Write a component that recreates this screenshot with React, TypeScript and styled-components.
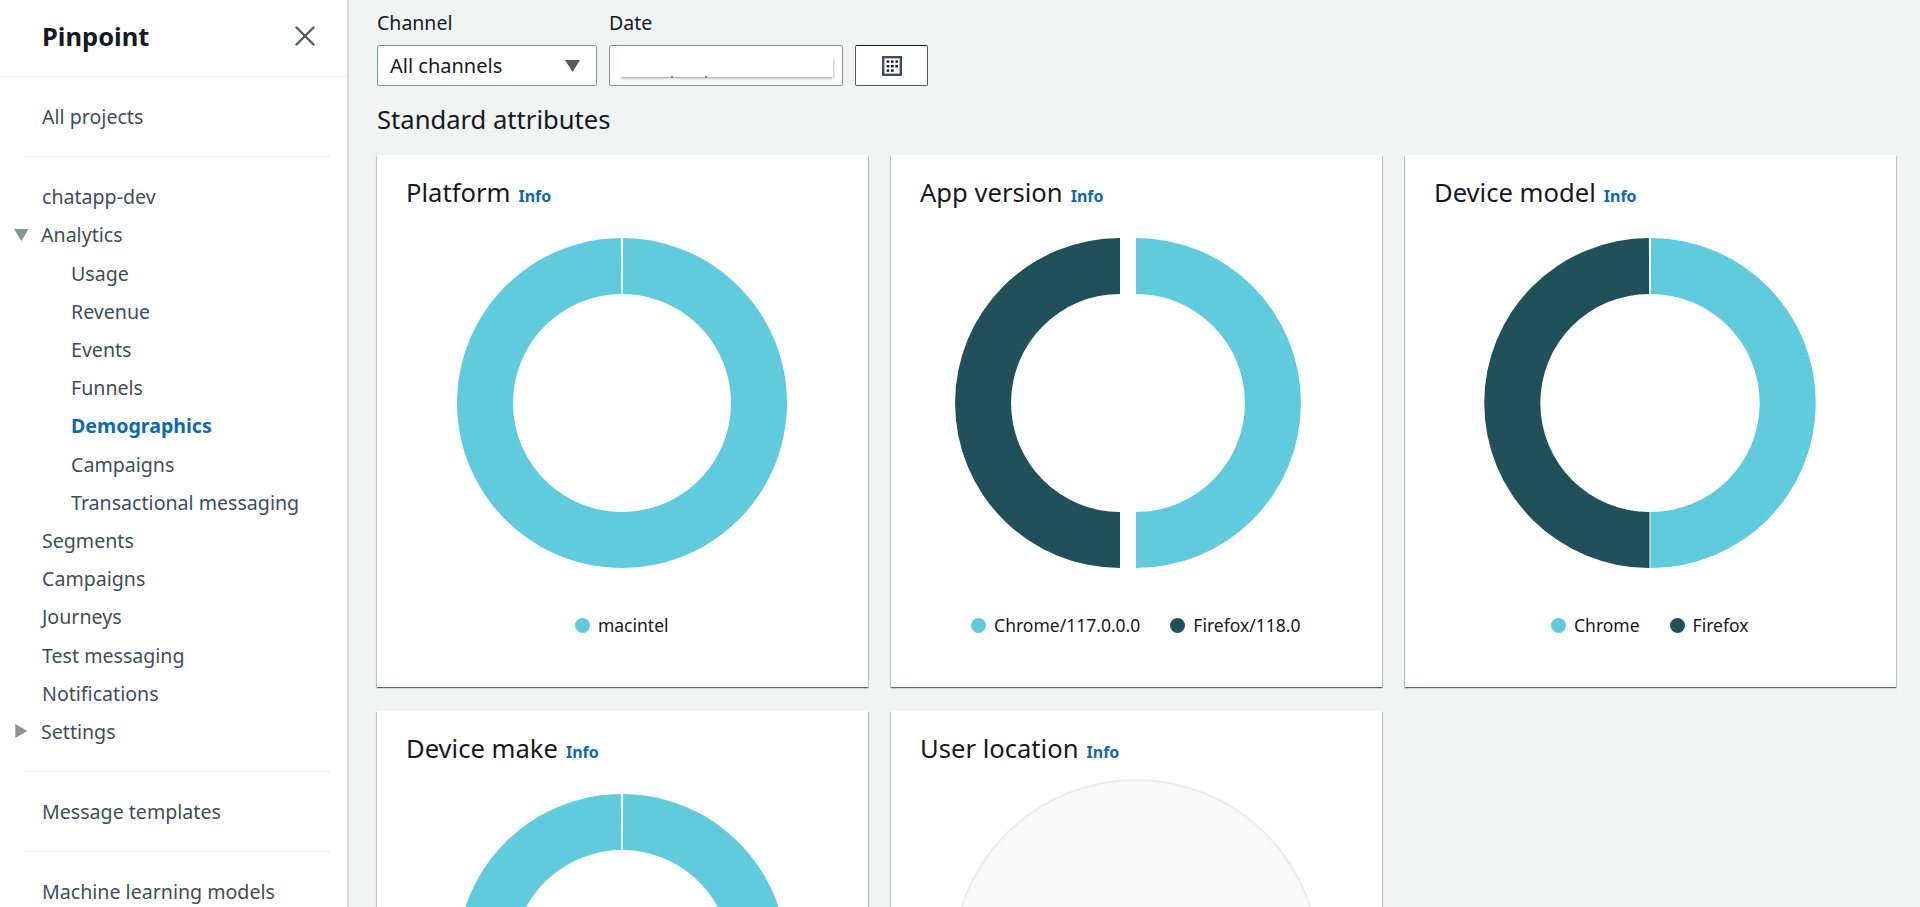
import { createGlobalStyle } from 'styled-components'
import styled from 'styled-components'
import { X } from 'lucide-react'

const CYAN = '#60cbdc'
const TEAL = '#20505a'

const GlobalStyle = createGlobalStyle`
  html,
  body {
    margin: 0;
    padding: 0;
    height: 907px;
    overflow: hidden;
    background: #f2f3f3;
    font-family: 'Noto Sans', 'Liberation Sans', sans-serif;
  }
`

const Page = styled.div`
  display: flex;
  height: 907px;
  overflow: hidden;
`

const Sidebar = styled.nav`
  flex: 0 0 349px;
  box-sizing: border-box;
  background: #fff;
  border-right: 2px solid #d5dbdb;
  overflow: hidden;
`

const SidebarHeader = styled.div`
  height: 77px;
  box-sizing: border-box;
  padding: 0 25px 5px 42px;
  display: flex;
  align-items: center;
  justify-content: space-between;
  border-bottom: 1px solid #e9ebed;
  font-size: 25.5px;
  font-weight: 700;
  color: #16191f;
`

const CloseButton = styled.span`
  display: flex;
  color: #545b64;
`

const NavSection = styled.div`
  padding: 20.5px 0;
  border-bottom: 1px solid #e9ebed;
  margin: 0 17px 0 24px;

  &:last-child {
    border-bottom: 0;
  }
`

const NavRow = styled.div<{ $sub?: boolean; $active?: boolean; $arrow?: boolean }>`
  height: 38.2px;
  display: flex;
  align-items: center;
  position: relative;
  padding-left: ${p => (p.$sub ? 47 : p.$arrow ? 17 : 18)}px;
  font-size: 19.6px;
  font-weight: ${p => (p.$active ? 700 : 400)};
  color: ${p => (p.$active ? '#0f68b5' : '#414d5c')};
  white-space: nowrap;
`

const NavArrow = styled.svg`
  position: absolute;
  left: -11px;
  top: 11px;
`

const Main = styled.main`
  flex: 1;
  min-width: 0;
  padding: 11px 25px 0 28px;
`

const Filters = styled.div`
  display: flex;
  align-items: flex-end;
  gap: 12px;
`

const Field = styled.div<{ $width: number }>`
  width: ${p => p.$width}px;
`

const FieldLabel = styled.div`
  height: 23px;
  line-height: 23px;
  margin-bottom: 11px;
  font-size: 19.5px;
  color: #16191f;
`

const SelectBox = styled.div`
  height: 41px;
  box-sizing: border-box;
  display: flex;
  align-items: center;
  justify-content: space-between;
  padding: 0 16px 0 12px;
  background: #fff;
  border: 1px solid #879596;
  border-radius: 2px;
  font-size: 20px;
  color: #16191f;
`

const DateBox = styled.div`
  height: 41px;
  box-sizing: border-box;
  padding: 10px 9px 8px;
  background: #fff;
  border: 1px solid #879596;
  border-radius: 2px;
`

const DateMask = styled.div`
  position: relative;
  height: 100%;
  box-shadow: 1px 2px 3px -1px rgba(60, 60, 60, 0.55);
`

const DateTick = styled.span<{ $left: number }>`
  position: absolute;
  left: ${p => p.$left}px;
  bottom: -1px;
  width: 2px;
  height: 2px;
  background: #8a8a8a;
`

const CalendarButton = styled.div`
  width: 73px;
  height: 41px;
  box-sizing: border-box;
  display: flex;
  align-items: center;
  justify-content: center;
  background: #fff;
  border: 1px solid #545b64;
  border-top-color: #16191f;
  border-radius: 2px;
`

const SectionTitle = styled.h2`
  margin: 18px 0 19px;
  height: 32px;
  line-height: 32px;
  font-size: 25.6px;
  font-weight: 400;
  color: #16191f;
`

const CardGrid = styled.div`
  display: grid;
  grid-template-columns: repeat(3, 490.5px);
  column-gap: 23.5px;
  row-gap: 24px;
`

const Card = styled.section`
  height: 531.5px;
  box-sizing: border-box;
  padding: 18px 24px 0 29px;
  background: #fff;
  box-shadow: 0 1px 1px 0 rgba(0, 28, 36, 0.5), 1px 1px 1px 0 rgba(0, 28, 36, 0.15), -1px 1px 1px 0 rgba(0, 28, 36, 0.15);
`

const CardTitle = styled.h3`
  margin: 0;
  height: 40px;
  line-height: 40px;
  font-size: 25.6px;
  font-weight: 400;
  color: #16191f;
  white-space: nowrap;
`

const InfoLink = styled.a`
  margin-left: 8px;
  font-size: 16px;
  font-weight: 700;
  color: #0f68b5;
`

const ChartArea = styled.div<{ $empty?: boolean }>`
  margin-top: ${p => (p.$empty ? 9 : 25)}px;
  height: 330px;
  display: flex;
  justify-content: center;
  transform: translateX(-3px);
`

const Legend = styled.div`
  margin-top: 45px;
  display: flex;
  justify-content: center;
  gap: 30px;
  transform: translateX(-3px);
`

const LegendItem = styled.div`
  display: flex;
  align-items: center;
  gap: 8px;
  font-size: 17.5px;
  color: #16191f;
`

const LegendDot = styled.span<{ $color: string }>`
  width: 15px;
  height: 15px;
  border-radius: 50%;
  background: ${p => p.$color};
`

const polar = (cx: number, cy: number, r: number, deg: number) => {
  const a = ((deg - 90) * Math.PI) / 180
  return `${(cx + r * Math.cos(a)).toFixed(2)} ${(cy + r * Math.sin(a)).toFixed(2)}`
}

// one ring segment, clockwise from start to end in degrees
const arcPath = (cx: number, cy: number, from: number, to: number) => {
  const R = 165
  const r = 109
  const large = to - from > 180 ? 1 : 0
  return [
    `M ${polar(cx, cy, R, from)}`,
    `A ${R} ${R} 0 ${large} 1 ${polar(cx, cy, R, to)}`,
    `L ${polar(cx, cy, r, to)}`,
    `A ${r} ${r} 0 ${large} 0 ${polar(cx, cy, r, from)}`,
    'Z',
  ].join(' ')
}

const FullRing = () => (
  <svg width="332" height="330" viewBox="0 0 332 330">
    <path d={arcPath(166, 165, 0.4, 359.6)} fill={CYAN} />
  </svg>
)

const SplitRing = () => (
  <svg width="332" height="330" viewBox="0 0 332 330">
    <path d={arcPath(166.5, 165, 0.2, 180)} fill={CYAN} />
    <path d={arcPath(165.5, 165, 180, 359.8)} fill={TEAL} />
  </svg>
)

// the wider box keeps the teal half off to the left of the card's centre
const ExplodedRing = () => (
  <svg width="362" height="330" viewBox="0 0 362 330">
    <path d={arcPath(181, 165, 0, 180)} fill={CYAN} />
    <path d={arcPath(165, 165, 180, 360)} fill={TEAL} />
  </svg>
)

const EmptyRing = () => (
  <svg width="370" height="370" viewBox="0 0 370 370">
    <circle cx="185" cy="185" r="183" fill="#f9f9f9" stroke="#eaeded" strokeWidth="2" />
  </svg>
)

const calendarDots = [
  [4.6, 4.4],
  [9, 4.4],
  [13.4, 4.4],
  [4.6, 9],
  [9, 9],
  [13.4, 9],
  [4.6, 13.4],
  [9, 13.4],
]

const CalendarIcon = () => (
  <svg width="20" height="20" viewBox="0 0 20 20">
    <rect x="1.2" y="1.2" width="17.6" height="17.6" fill="none" stroke="#414d5c" strokeWidth="2.4" />
    {calendarDots.map(([x, y]) => (
      <rect key={`${x}-${y}`} x={x} y={y} width="2.6" height="2.4" fill="#16191f" />
    ))}
  </svg>
)

const Caret = ({ right }: { right?: boolean }) => (
  <NavArrow width="16" height="16" viewBox="0 0 16 16">
    <path d={right ? 'M2.3 1 L14.3 8 L2.3 15 Z' : 'M1 2 L15.6 2 L8.3 14 Z'} fill="#879596" />
  </NavArrow>
)

const cards = [
  { title: 'Platform', chart: <FullRing />, legend: [{ label: 'macintel', color: CYAN }] },
  {
    title: 'App version',
    chart: <ExplodedRing />,
    legend: [
      { label: 'Chrome/117.0.0.0', color: CYAN },
      { label: 'Firefox/118.0', color: TEAL },
    ],
  },
  {
    title: 'Device model',
    chart: <SplitRing />,
    legend: [
      { label: 'Chrome', color: CYAN },
      { label: 'Firefox', color: TEAL },
    ],
  },
  { title: 'Device make', chart: <FullRing />, legend: [] },
  { title: 'User location', chart: <EmptyRing />, legend: [], empty: true },
]

const App = () => (
  <Page>
    <GlobalStyle />
    <Sidebar>
      <SidebarHeader>
        Pinpoint
        <CloseButton>
          <X size={34} strokeWidth={1.7} />
        </CloseButton>
      </SidebarHeader>
      <NavSection>
        <NavRow>All projects</NavRow>
      </NavSection>
      <NavSection>
        <NavRow>chatapp-dev</NavRow>
        <NavRow $arrow>
          <Caret />
          Analytics
        </NavRow>
        <NavRow $sub>Usage</NavRow>
        <NavRow $sub>Revenue</NavRow>
        <NavRow $sub>Events</NavRow>
        <NavRow $sub>Funnels</NavRow>
        <NavRow $sub $active>
          Demographics
        </NavRow>
        <NavRow $sub>Campaigns</NavRow>
        <NavRow $sub>Transactional messaging</NavRow>
        <NavRow>Segments</NavRow>
        <NavRow>Campaigns</NavRow>
        <NavRow>Journeys</NavRow>
        <NavRow>Test messaging</NavRow>
        <NavRow>Notifications</NavRow>
        <NavRow $arrow>
          <Caret right />
          Settings
        </NavRow>
      </NavSection>
      <NavSection>
        <NavRow>Message templates</NavRow>
      </NavSection>
      <NavSection>
        <NavRow>Machine learning models</NavRow>
      </NavSection>
    </Sidebar>
    <Main>
      <Filters>
        <Field $width={220}>
          <FieldLabel>Channel</FieldLabel>
          <SelectBox>
            All channels
            <svg width="15" height="12" viewBox="0 0 15 12">
              <path d="M0 0 L15 0 L7.5 12 Z" fill="#545b64" />
            </svg>
          </SelectBox>
        </Field>
        <Field $width={234}>
          <FieldLabel>Date</FieldLabel>
          <DateBox>
            <DateMask>
              <DateTick $left={52} />
              <DateTick $left={86} />
            </DateMask>
          </DateBox>
        </Field>
        <CalendarButton>
          <CalendarIcon />
        </CalendarButton>
      </Filters>
      <SectionTitle>Standard attributes</SectionTitle>
      <CardGrid>
        {cards.map(card => (
          <Card key={card.title}>
            <CardTitle>
              {card.title}
              <InfoLink>Info</InfoLink>
            </CardTitle>
            <ChartArea $empty={card.empty}>{card.chart}</ChartArea>
            {card.legend.length > 0 && (
              <Legend>
                {card.legend.map(item => (
                  <LegendItem key={item.label}>
                    <LegendDot $color={item.color} />
                    {item.label}
                  </LegendItem>
                ))}
              </Legend>
            )}
          </Card>
        ))}
      </CardGrid>
    </Main>
  </Page>
)

export default App
